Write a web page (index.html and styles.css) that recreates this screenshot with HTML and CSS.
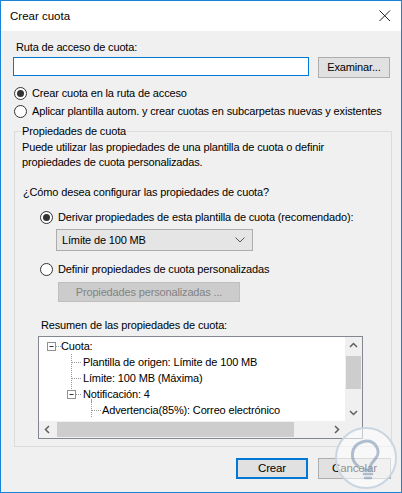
FILE: index.html
```html
<!DOCTYPE html>
<html lang="es">
<head>
<meta charset="utf-8">
<title>Crear cuota</title>
<link rel="stylesheet" href="styles.css">
</head>
<body>
<div class="window">
  <div class="titlebar">
    <span class="title">Crear cuota</span>
    <svg class="close" width="12" height="12" viewBox="0 0 12 12"><path d="M0.5 0.5 L11 11 M11 0.5 L0.5 11" stroke="#222" stroke-width="1" fill="none"/></svg>
  </div>
  <div class="content">
    <div class="label">Ruta de acceso de cuota:</div>
    <div class="path-row">
      <div class="input"></div>
      <div class="btn">Examinar...</div>
    </div>
    <div class="radio-row r1"><span class="radio checked"></span><span>Crear cuota en la ruta de acceso</span></div>
    <div class="radio-row r2"><span class="radio"></span><span>Aplicar plantilla autom. y crear cuotas en subcarpetas nuevas y existentes</span></div>

    <div class="group">
      <div class="legend">Propiedades de cuota</div>
      <div class="desc">Puede utilizar las propiedades de una plantilla de cuota o definir<br>propiedades de cuota personalizadas.</div>
      <div class="question">¿Cómo desea configurar las propiedades de cuota?</div>
      <div class="radio-row r3"><span class="radio checked"></span><span>Derivar propiedades de esta plantilla de cuota (recomendado):</span></div>
      <div class="combo"><span>Límite de 100 MB</span>
        <svg width="10" height="6" viewBox="0 0 10 6"><path d="M0.5 0.5 L5 5 L9.5 0.5" stroke="#555" stroke-width="1" fill="none"/></svg>
      </div>
      <div class="radio-row r4"><span class="radio"></span><span>Definir propiedades de cuota personalizadas</span></div>
      <div class="btn disabled">Propiedades personalizadas ...</div>
      <div class="summary-label">Resumen de las propiedades de cuota:</div>
      <div class="tree">
        <div class="tree-main">
          <div class="tree-rows">
            <div class="trow">
              <svg width="22" height="16" viewBox="0 0 22 16"><rect x="8.5" y="4.5" width="8" height="8" fill="#fff" stroke="#919191"/><path d="M10.5 8.5 H14.5" stroke="#333"/><path d="M17 8.5 H22" stroke="#999" stroke-dasharray="1 1"/></svg>
              <span>Cuota:</span>
            </div>
            <div class="trow">
              <svg width="44" height="16" viewBox="0 0 44 16"><path d="M32.5 0 V16" stroke="#999" stroke-dasharray="1 1"/><path d="M33 8.5 H43" stroke="#999" stroke-dasharray="1 1"/></svg>
              <span>Plantilla de origen: Límite de 100 MB</span>
            </div>
            <div class="trow">
              <svg width="44" height="16" viewBox="0 0 44 16"><path d="M32.5 0 V16" stroke="#999" stroke-dasharray="1 1"/><path d="M33 8.5 H43" stroke="#999" stroke-dasharray="1 1"/></svg>
              <span>Límite: 100 MB (Máxima)</span>
            </div>
            <div class="trow">
              <svg width="44" height="16" viewBox="0 0 44 16"><path d="M32.5 0 V4" stroke="#999" stroke-dasharray="1 1"/><rect x="28.5" y="4.5" width="8" height="8" fill="#fff" stroke="#919191"/><path d="M30.5 8.5 H34.5" stroke="#333"/><path d="M37 8.5 H43" stroke="#999" stroke-dasharray="1 1"/><path d="M52.5 13 V16" stroke="#999"/></svg>
              <span>Notificación: 4</span>
            </div>
            <div class="trow">
              <svg width="63" height="16" viewBox="0 0 63 16"><path d="M52.5 0 V16" stroke="#999" stroke-dasharray="1 1"/><path d="M53 8.5 H62" stroke="#999" stroke-dasharray="1 1"/></svg>
              <span>Advertencia(85%): Correo electrónico</span>
            </div>
          </div>
          <div class="vscroll">
            <svg width="17" height="17" viewBox="0 0 17 17"><path d="M5 10 L8.5 6.5 L12 10" stroke="#606060" stroke-width="1.5" fill="none"/></svg>
            <div class="vtrack"><div class="vthumb"></div></div>
            <svg width="17" height="17" viewBox="0 0 17 17"><path d="M5 7 L8.5 10.5 L12 7" stroke="#606060" stroke-width="1.5" fill="none"/></svg>
          </div>
        </div>
        <div class="hscroll">
          <svg width="17" height="17" viewBox="0 0 17 17"><path d="M10 5 L6.5 8.5 L10 12" stroke="#606060" stroke-width="1.5" fill="none"/></svg>
          <div class="htrack"><div class="hthumb"></div></div>
          <svg width="17" height="17" viewBox="0 0 17 17"><path d="M7 5 L10.5 8.5 L7 12" stroke="#606060" stroke-width="1.5" fill="none"/></svg>
          <div class="corner"></div>
        </div>
      </div>
    </div>

    <div class="actions">
      <div class="btn default">Crear</div>
      <div class="btn">Cancelar</div>
    </div>
  </div>
  <svg class="watermark" width="64" height="64" viewBox="0 0 64 64">
    <circle cx="32" cy="32" r="30" fill="#ffffff" fill-opacity="0.55" stroke="#c9d6e2" stroke-width="2"/>
    <path d="M24 40 C16 34 16 20 28 16 C40 12 48 24 42 32 C38 37 36 38 36 44 L30 44" fill="none" stroke="#7e98b3" stroke-width="3" stroke-opacity="0.6" stroke-linecap="round"/>
    <path d="M30 48 L38 48 M31 52 L37 52" stroke="#7e98b3" stroke-width="2.5" stroke-opacity="0.6" stroke-linecap="round"/>
  </svg>
</div>
</body>
</html>
```

FILE: styles.css
```css
* { box-sizing: border-box; }
html, body { margin: 0; padding: 0; background: #fff; }
body {
  font-family: "Liberation Sans", Arial, sans-serif;
  font-size: 11px;
  letter-spacing: -0.15px;
  color: #000;
}
.window {
  position: relative;
  width: 402px;
  height: 493px;
  border: 1px solid #1883d7;
  background: #f0f0f0;
  display: flex;
  flex-direction: column;
  overflow: hidden;
}
.titlebar {
  height: 30px;
  background: #fff;
  display: flex;
  align-items: center;
  justify-content: space-between;
  padding: 0 10px 0 9px;
  font-size: 11.5px;
  letter-spacing: 0;
}
.content {
  padding: 9px 11px 0 12px;
  display: flex;
  flex-direction: column;
  line-height: 15px;
}
.label { margin-left: 3px; height: 15px; }
.path-row {
  margin-top: 2px;
  display: flex;
  align-items: flex-start;
  gap: 9px;
}
.input {
  width: 296px;
  height: 19px;
  background: #fff;
  border: 1px solid #0078d7;
}
.btn {
  height: 21px;
  background: #e1e1e1;
  border: 1px solid #adadad;
  display: flex;
  align-items: center;
  justify-content: center;
  white-space: nowrap;
}
.path-row .btn { width: 72px; }
.radio-row {
  height: 18px;
  display: flex;
  align-items: center;
  gap: 5px;
  white-space: nowrap;
}
.r1 { margin-top: 6px; margin-left: 1px; }
.r2 { margin-left: 1px; }
.radio {
  width: 13px;
  height: 13px;
  border-radius: 50%;
  border: 1px solid #333;
  background: #fff;
  display: flex;
  align-items: center;
  justify-content: center;
  flex: none;
}
.radio.checked::after {
  content: "";
  width: 7px;
  height: 7px;
  border-radius: 50%;
  background: #333;
}
.group {
  margin: 11px -2px 0 1px;
  border: 1px solid #dcdcdc;
  padding: 0 7px 7px 7px;
  display: flex;
  flex-direction: column;
  align-items: flex-start;
}
.legend {
  margin-top: -8px;
  margin-left: -1px;
  padding: 0 1px;
  background: #f0f0f0;
}
.desc { margin-top: 1px; }
.question { margin-top: 15px; margin-left: 1px; }
.r3 { margin-top: 8px; margin-left: 18px; }
.combo {
  margin-top: 3px;
  margin-left: 34px;
  width: 197px;
  height: 22px;
  background: #e5e5e5;
  border: 1px solid #adadad;
  display: flex;
  align-items: center;
  justify-content: space-between;
  padding: 0 7px 0 5px;
}
.r4 { margin-top: 9px; margin-left: 18px; }
.btn.disabled {
  margin-top: 4px;
  margin-left: 36px;
  width: 182px;
  height: 20px;
  background: #cccccc;
  border-color: #bfbfbf;
  color: #838383;
}
.summary-label { margin-top: 16px; margin-left: 19px; }
.tree {
  margin-top: 3px;
  margin-left: 16px;
  width: 325px;
  height: 103px;
  border: 1px solid #828790;
  background: #fff;
  display: flex;
  flex-direction: column;
}
.tree-main { flex: 1; display: flex; min-height: 0; }
.tree-rows { flex: 1; padding-top: 1px; }
.trow {
  height: 16px;
  line-height: 16px;
  display: flex;
  align-items: center;
  white-space: nowrap;
}
.trow svg { flex: none; overflow: visible; }
.vscroll {
  width: 17px;
  display: flex;
  flex-direction: column;
  background: #f0f0f0;
}
.vtrack { flex: 1; padding: 0 1px; }
.vthumb { margin-top: 2px; height: 33px; background: #cdcdcd; }
.hscroll {
  height: 17px;
  display: flex;
  background: #f0f0f0;
}
.htrack { flex: 1; padding: 1px 0; }
.hthumb { margin-left: 1px; width: 237px; height: 15px; background: #cdcdcd; }
.corner { width: 17px; background: #f0f0f0; }
.actions {
  margin-top: 11px;
  margin-right: -1px;
  display: flex;
  justify-content: flex-end;
  gap: 10px;
}
.actions .btn { width: 73px; font-size: 11.5px; }
.actions .btn.default { width: 72px; border: 2px solid #0078d7; }
.watermark {
  position: absolute;
  right: 3px;
  bottom: 2px;
}
```
